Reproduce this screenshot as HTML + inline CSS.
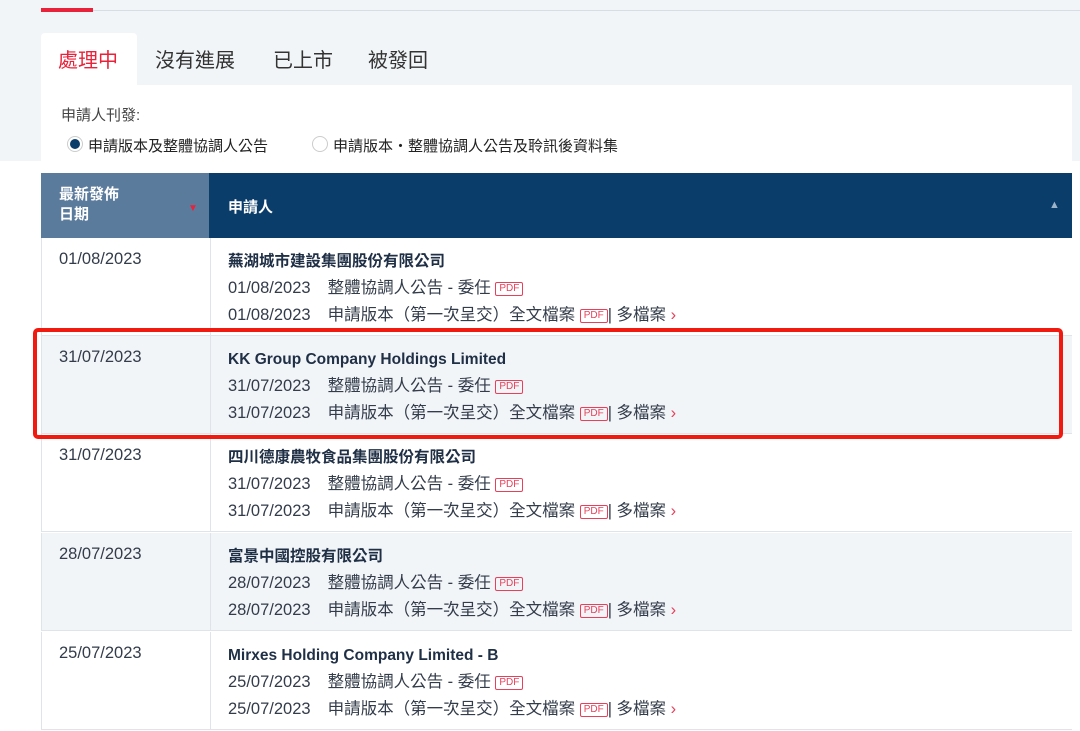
<!DOCTYPE html>
<html><head><meta charset="utf-8"><style>
*{margin:0;padding:0;box-sizing:border-box}
body{width:1080px;height:731px;overflow:hidden;background:#fff;font-family:"Liberation Sans","Noto Sans CJK TC",sans-serif;color:#333c4a;position:relative}
.top{position:absolute;left:0;top:0;width:1080px;height:161px;background:#f2f5f8}
.line{position:absolute;left:41px;top:10px;width:1039px;height:1px;background:#d6dde5}
.red{position:absolute;left:41px;top:8px;width:52px;height:4px;background:#e8223a}
.tab{position:absolute;top:44px;font-size:20px;color:#333}
.panel{position:absolute;left:41px;top:85px;width:1031px;height:76px;background:#fff}
.acttab{position:absolute;left:41px;top:33px;width:96px;height:60px;background:#fff;border-radius:4px 4px 0 0}
.lbl{position:absolute;left:61px;top:104px;font-size:15px;color:#444}
.radio{position:absolute;top:135px;font-size:15px;color:#222}
.rc{position:absolute;top:136px;width:16px;height:16px;border:1px solid #ccc;border-radius:50%;background:#fff}
.rc.on::after{content:"";position:absolute;left:2px;top:2px;width:10px;height:10px;border-radius:50%;background:#0b3d6b}
.hd1{position:absolute;left:41px;top:173px;width:168px;height:65px;background:#5b7b9d;color:#fff;font-weight:bold;font-size:15px;padding:12px 0 0 18px;line-height:20px}
.hd2{position:absolute;left:209px;top:173px;width:863px;height:65px;background:#0b3d6b;color:#fff;font-weight:bold;font-size:15px;padding:23px 0 0 19px}
.row{position:absolute;left:41px;width:1031px;height:98px;border-bottom:1px solid #dfe4ea;border-left:1px solid #dfe4ea}
.row.g{background:#f2f5f8}
.row .d{position:absolute;left:17px;top:12px;font-size:16.5px}
.row .sep{position:absolute;left:168px;top:0;width:1px;height:100%;background:#dfe4ea}
.row .c{position:absolute;left:186px;top:10px;font-size:16.5px;line-height:27px;white-space:nowrap}
.row .c b{color:#1f2f45;font-size:15.5px}
.sp{display:inline-block;width:17px}
.pdf{display:inline-block;font-size:10px;color:#e8405a;border:1px solid #e8405a;border-radius:2px;padding:0 3px;line-height:12px;vertical-align:2px}
.ar{color:#e8405a}
.box{position:absolute;left:33px;top:328px;width:1030px;height:111px;border:4px solid #f01a10;border-radius:5px}
</style></head><body>
<div class="top"></div>
<div class="line"></div><div class="red"></div>
<div class="panel"></div><div class="acttab"></div>
<div class="tab" style="left:58px;color:#e8223a">處理中</div>
<div class="tab" style="left:155px">沒有進展</div>
<div class="tab" style="left:273px">已上市</div>
<div class="tab" style="left:368px">被發回</div>
<div class="lbl">申請人刊發:</div>
<div class="rc on" style="left:67px"></div><div class="radio" style="left:88px">申請版本及整體協調人公告</div>
<div class="rc" style="left:312px"></div><div class="radio" style="left:333px">申請版本・整體協調人公告及聆訊後資料集</div>
<div class="hd1">最新發佈<br>日期<span style="position:absolute;left:147px;top:26px;color:#e8223a;font-size:10px">▼</span></div>
<div class="hd2">申請人<span style="position:absolute;left:840px;top:26px;color:#9fb3c8;font-size:11px">▲</span></div>

<div class="row" style="top:238px"><div class="sep"></div><div class="d">01/08/2023</div><div class="c"><b>蕪湖城市建設集團股份有限公司</b><br>01/08/2023<span class="sp"></span>整體協調人公告 - 委任 <span class="pdf">PDF</span><br>01/08/2023<span class="sp"></span>申請版本（第一次呈交）全文檔案 <span class="pdf">PDF</span>| 多檔案 <span class="ar">›</span></div></div>
<div class="row g" style="top:336px"><div class="sep"></div><div class="d">31/07/2023</div><div class="c"><b>KK Group Company Holdings Limited</b><br>31/07/2023<span class="sp"></span>整體協調人公告 - 委任 <span class="pdf">PDF</span><br>31/07/2023<span class="sp"></span>申請版本（第一次呈交）全文檔案 <span class="pdf">PDF</span>| 多檔案 <span class="ar">›</span></div></div>
<div class="row" style="top:434px"><div class="sep"></div><div class="d">31/07/2023</div><div class="c"><b>四川德康農牧食品集團股份有限公司</b><br>31/07/2023<span class="sp"></span>整體協調人公告 - 委任 <span class="pdf">PDF</span><br>31/07/2023<span class="sp"></span>申請版本（第一次呈交）全文檔案 <span class="pdf">PDF</span>| 多檔案 <span class="ar">›</span></div></div>
<div class="row g" style="top:533px"><div class="sep"></div><div class="d">28/07/2023</div><div class="c"><b>富景中國控股有限公司</b><br>28/07/2023<span class="sp"></span>整體協調人公告 - 委任 <span class="pdf">PDF</span><br>28/07/2023<span class="sp"></span>申請版本（第一次呈交）全文檔案 <span class="pdf">PDF</span>| 多檔案 <span class="ar">›</span></div></div>
<div class="row" style="top:632px"><div class="sep"></div><div class="d">25/07/2023</div><div class="c"><b>Mirxes Holding Company Limited - B</b><br>25/07/2023<span class="sp"></span>整體協調人公告 - 委任 <span class="pdf">PDF</span><br>25/07/2023<span class="sp"></span>申請版本（第一次呈交）全文檔案 <span class="pdf">PDF</span>| 多檔案 <span class="ar">›</span></div></div>
<div class="box"></div>
</body></html>
